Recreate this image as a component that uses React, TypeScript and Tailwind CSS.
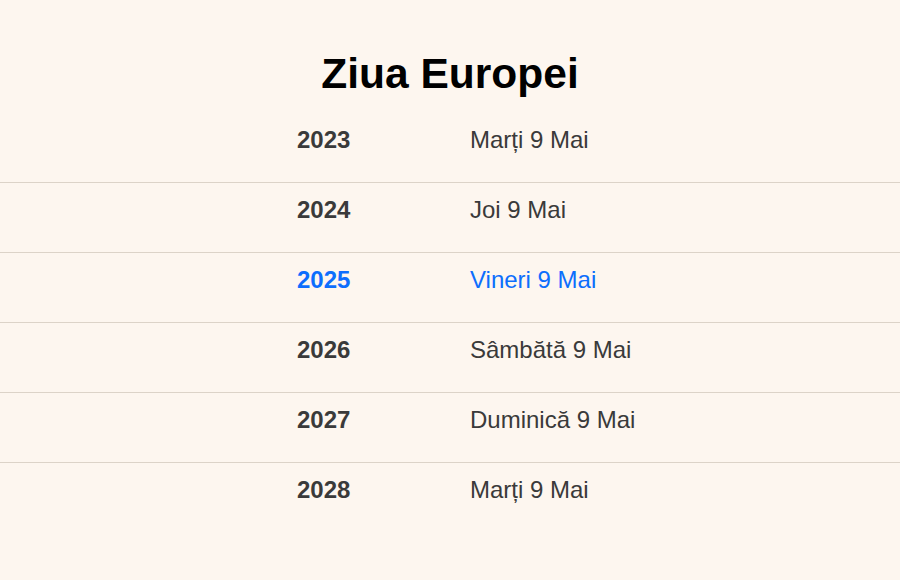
import React from 'react';

const rows = [
  { year: '2023', day: 'Marți 9 Mai' },
  { year: '2024', day: 'Joi 9 Mai' },
  { year: '2025', day: 'Vineri 9 Mai', current: true },
  { year: '2026', day: 'Sâmbătă 9 Mai' },
  { year: '2027', day: 'Duminică 9 Mai' },
  { year: '2028', day: 'Marți 9 Mai' },
];

export default function App() {
  return (
    <div
      className="w-[900px] h-[580px] bg-[#fdf6ef] pt-[50px]"
      style={{ fontFamily: '"Liberation Sans", Arial, sans-serif' }}
    >
      <h1 className="text-center text-[42.5px] leading-[48px] font-bold text-black">Ziua Europei</h1>

      {/* Year list */}
      <div className="mt-[15px]">
        {rows.map((r, i) => (
          <div
            key={r.year}
            className={`flex pt-[13px] pb-[28px] text-[24px] leading-[28px] ${
              i < rows.length - 1 ? 'border-b border-[#dcd3c8]' : ''
            } ${r.current ? 'text-[#0d6efd]' : 'text-[#3a3a3a]'}`}
          >
            <span className="ml-[297px] w-[173px] font-bold">{r.year}</span>
            <span>{r.day}</span>
          </div>
        ))}
      </div>
    </div>
  );
}
